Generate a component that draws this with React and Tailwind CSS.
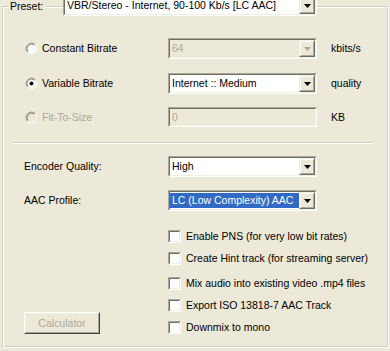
import React from "react";

const Radio = ({ checked, disabled }) => (
  <svg width="13" height="13" viewBox="0 0 13 13" className="shrink-0">
    <circle cx="6.5" cy="6.5" r="5" fill={disabled ? "#ECE9D8" : "#ffffff"} />
    <path d="M2.61 10.39 A5.5 5.5 0 0 1 10.39 2.61" fill="none" stroke="#ACA899" />
    <path d="M10.39 2.61 A5.5 5.5 0 0 1 2.61 10.39" fill="none" stroke="#ffffff" />
    <path d="M3.32 9.68 A4.5 4.5 0 0 1 9.68 3.32" fill="none" stroke="#716F64" />
    <path d="M9.68 3.32 A4.5 4.5 0 0 1 3.32 9.68" fill="none" stroke="#F1EFE2" />
    {checked && <circle cx="6.5" cy="6.5" r="2" fill="#000" />}
  </svg>
);

const Checkbox = () => (
  <div className="w-[13px] h-[13px] shrink-0 border-t border-l border-t-[#ACA899] border-l-[#ACA899] border-b border-r border-b-white border-r-white">
    <div className="w-full h-full bg-white border-t border-l border-t-[#716F64] border-l-[#716F64] border-b border-r border-b-[#F1EFE2] border-r-[#F1EFE2]" />
  </div>
);

// sunken 2px edge
const Sunken = ({ className = "", inner = "", children }) => (
  <div className={`border-t border-l border-t-[#ACA899] border-l-[#ACA899] border-b border-r border-b-white border-r-white ${className}`}>
    <div className={`h-full border-t border-l border-t-[#716F64] border-l-[#716F64] border-b border-r border-b-[#F1EFE2] border-r-[#F1EFE2] ${inner}`}>
      {children}
    </div>
  </div>
);

const DropButton = ({ disabled }) => (
  <div className="w-[16px] h-full shrink-0 border-t border-l border-t-[#F1EFE2] border-l-[#F1EFE2] border-b border-r border-b-[#716F64] border-r-[#716F64]">
    <div className="h-full flex items-center justify-center bg-[#ECE9D8] border-t border-l border-t-white border-l-white border-b border-r border-b-[#ACA899] border-r-[#ACA899]">
      <svg width="7" height="4" viewBox="0 0 7 4">
        <path d="M0 0H7L3.5 4Z" fill={disabled ? "#ACA899" : "#000"} />
      </svg>
    </div>
  </div>
);

const Combo = ({ text, disabled, selected, className = "" }) => (
  <Sunken
    className={`w-[149px] h-[21px] ${className}`}
    inner={`flex ${disabled ? "bg-[#ECE9D8]" : "bg-white"}`}
  >
    <div className="flex-1 flex items-center py-[1px] min-w-0">
      <div
        className={`h-full w-full flex items-center px-[2px] whitespace-nowrap overflow-hidden ${
          selected ? "bg-[#316AC5] text-white" : disabled ? "text-[#ACA899]" : ""
        }`}
      >
        {text}
      </div>
    </div>
    <DropButton disabled={disabled} />
  </Sunken>
);

const options = [
  "Enable PNS (for very low bit rates)",
  "Create Hint track (for streaming server)",
  "Mix audio into existing video .mp4 files",
  "Export ISO 13818-7 AAC Track",
  "Downmix to mono",
];
const optionGaps = ["mt-0", "mt-[9px]", "mt-[12px]", "mt-[9px]", "mt-[9px]"];

export default function App() {
  return (
    <div className="relative w-[390px] h-[351px] overflow-hidden bg-[#ECE9D8] text-black text-[10.5px] leading-[13px] font-['Liberation_Sans',Arial,sans-serif]">
      <div className="pt-[6px] pl-[2px] pr-[1px]">
        <div className="h-[342px] border-t border-l border-t-[#D0D0BF] border-l-[#D0D0BF] border-b border-r border-b-white border-r-white">
          <div className="h-full flex flex-col border-t border-l border-t-white border-l-white border-b border-r border-b-[#D0D0BF] border-r-[#D0D0BF]">
            {/* bitrate mode */}
            <div className="mt-[30px] h-[21px] flex items-center">
              <div className="w-[164px] pl-[21px] flex items-center gap-[4px]">
                <Radio />
                <span>Constant Bitrate</span>
              </div>
              <Combo text="64" disabled />
              <span className="ml-[14px]">kbits/s</span>
            </div>
            <div className="mt-[14px] h-[21px] flex items-center">
              <div className="w-[164px] pl-[21px] flex items-center gap-[4px]">
                <Radio checked />
                <span>Variable Bitrate</span>
              </div>
              <Combo text="Internet :: Medium" />
              <span className="ml-[14px]">quality</span>
            </div>
            <div className="mt-[13px] h-[20px] flex items-center">
              <div className="w-[164px] pl-[21px] flex items-center gap-[4px] text-[#ACA899]">
                <Radio disabled />
                <span>Fit-To-Size</span>
              </div>
              <Sunken className="w-[149px] h-[20px]" inner="bg-[#ECE9D8] flex items-center px-[2px] text-[#ACA899]">
                0
              </Sunken>
              <span className="ml-[14px]">KB</span>
            </div>

            <div className="mt-[15px] ml-[8px] w-[361px] border-t border-t-[#D0D0BF] border-b border-b-white" />

            {/* encoder */}
            <div className="mt-[12px] h-[21px] flex items-center">
              <div className="w-[164px] pl-[20px]">Encoder Quality:</div>
              <Combo text="High" />
            </div>
            <div className="mt-[13px] h-[21px] flex items-center">
              <div className="w-[164px] pl-[20px]">AAC Profile:</div>
              <Combo text="LC (Low Complexity) AAC" selected />
            </div>

            {/* options */}
            <div className="mt-[19px] flex items-end">
              <div className="w-[164px] pl-[20px]">
                <div className="w-[76px] h-[22px] border-t border-l border-t-white border-l-white border-b border-r border-b-[#404040] border-r-[#404040]">
                  <div className="h-full flex items-center justify-center bg-[#ECE9D8] text-[#ACA899] border-t border-l border-t-[#F1EFE2] border-l-[#F1EFE2] border-b border-r border-b-[#ACA899] border-r-[#ACA899]">
                    Calculator
                  </div>
                </div>
              </div>
              <div className="flex flex-col">
                {options.map((label, i) => (
                  <div key={label} className={`${optionGaps[i]} h-[13px] flex items-center gap-[5px] whitespace-nowrap`}>
                    <Checkbox />
                    <span>{label}</span>
                  </div>
                ))}
              </div>
            </div>
          </div>
        </div>
      </div>

      {/* legend over the frame line */}
      <div className="absolute top-0 left-[8px] h-[13px] px-[2px] bg-[#ECE9D8] flex items-center">
        Preset:
      </div>
      <div className="absolute top-[-5px] left-[63px] flex">
        <Combo
          text="VBR/Stereo - Internet, 90-100 Kb/s [LC AAC]"
          className="w-[254px]"
        />
      </div>
    </div>
  );
}
